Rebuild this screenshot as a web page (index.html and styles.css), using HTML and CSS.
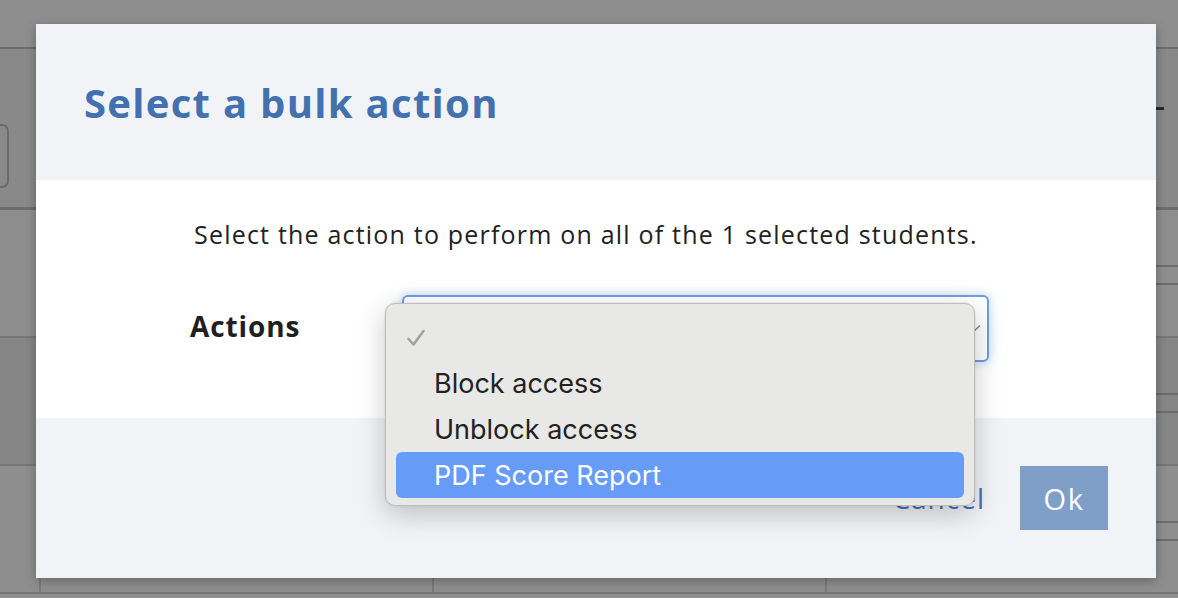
FILE: index.html
```html
<!DOCTYPE html>
<html lang="en">
<head>
<meta charset="utf-8">
<title>Select a bulk action</title>
<link rel="stylesheet" href="styles.css">
</head>
<body>
<div class="page">
  <div class="topbar"></div>
  <div class="toolbar">
    <div class="tool-btn"></div>
    <div class="tool-dash"></div>
  </div>
  <div class="table">
    <div class="row">
      <div class="cell c1"></div><div class="cell c2"></div><div class="cell c3"></div>
      <div class="cell c4"><div class="sub"></div></div>
    </div>
    <div class="row row-dark">
      <div class="cell c1"></div><div class="cell c2"></div><div class="cell c3"></div>
      <div class="cell c4"><div class="sub"></div></div>
    </div>
    <div class="row">
      <div class="cell c1"></div><div class="cell c2"></div><div class="cell c3"></div>
      <div class="cell c4"><div class="sub"></div></div>
    </div>
  </div>
</div>

<div class="modal">
  <div class="modal-header">
    <h1 class="modal-title">Select a bulk action</h1>
  </div>
  <div class="modal-body">
    <p class="intro">Select the action to perform on all of the 1 selected students.</p>
    <div class="form-row">
      <label class="form-label">Actions</label>
      <div class="select-wrap">
        <div class="select">
          <svg class="chev" width="16" height="10" viewBox="0 0 16 10"><path d="M1.5 2 L8 8 L14.5 2" fill="none" stroke="#8a8a8a" stroke-width="1.6" stroke-linecap="round" stroke-linejoin="round"/></svg>
        </div>
        <div class="menu">
          <div class="menu-item">
            <svg class="check" width="20" height="20" viewBox="0 0 20 20"><path d="M2.5 11 L7.5 16.5 L17.5 3" fill="none" stroke="#a0a0a0" stroke-width="2.6" stroke-linecap="round" stroke-linejoin="round"/></svg>
          </div>
          <div class="menu-item">Block access</div>
          <div class="menu-item">Unblock access</div>
          <div class="menu-item active">PDF Score Report</div>
        </div>
      </div>
    </div>
  </div>
  <div class="modal-footer">
    <a class="cancel" href="#">Cancel</a>
    <button class="ok" type="button">Ok</button>
  </div>
</div>
</body>
</html>
```

FILE: styles.css
```css
* { box-sizing: border-box; }
html, body { margin: 0; padding: 0; }
body {
  width: 1178px;
  height: 598px;
  overflow: hidden;
  background: #8e8e8e;
  font-family: "Open Sans", "Liberation Sans", sans-serif;
  position: relative;
}

/* dimmed background page */
.page { width: 1178px; }
.topbar { height: 49px; border-bottom: 2px solid #6c6c6c; }
.toolbar {
  height: 161px;
  border-bottom: 3px solid #6c6c6c;
  background: #898989;
  display: flex;
  justify-content: space-between;
  align-items: flex-start;
}
.tool-btn {
  width: 60px;
  height: 64px;
  margin-top: 75px;
  margin-left: -51px;
  border: 2px solid #6a6a6a;
  border-radius: 7px;
}
.tool-dash {
  width: 24px;
  height: 3px;
  margin-top: 58px;
  margin-right: 14px;
  background: #2a2a2a;
}
.row {
  display: flex;
  height: 128px;
  border-bottom: 2px solid #777;
}
.row-dark { background: #868686; }
.cell { height: 100%; border-left: 2px solid #7a7a7a; }
.c1 { width: 39px; border-left: none; }
.c2 { width: 393px; }
.c3 { width: 393px; }
.c4 { flex: 1; padding-top: 55px; }
.sub {
  height: 20px;
  border-top: 2px solid #6c6c6c;
  border-bottom: 2px solid #6c6c6c;
}

/* modal */
.modal {
  position: absolute;
  left: 36px;
  top: 24px;
  width: 1120px;
  height: 554px;
  background: #f2f3f7;
  box-shadow: 0 3px 10px rgba(0,0,0,0.28);
  display: flex;
  flex-direction: column;
}
.modal-header {
  height: 156px;
  padding-left: 48px;
  display: flex;
  align-items: center;
}
.modal-title {
  margin: 0;
  font-size: 40px;
  font-weight: 700;
  color: #4371b0;
  letter-spacing: 1.3px;
}
.modal-body {
  height: 238px;
  background: #fff;
  padding: 38px 0 0 0;
}
.intro {
  margin: 0 0 0 158px;
  font-size: 25px;
  line-height: 32px;
  color: #222;
  letter-spacing: 1.2px;
}
.form-row {
  display: flex;
  align-items: center;
  margin-top: 45px;
  padding-left: 154px;
}
.form-label {
  width: 212px;
  font-size: 28px;
  font-weight: 700;
  color: #1f1f1f;
  letter-spacing: 0.9px;
  margin-top: -5px;
}
.select-wrap { position: relative; width: 587px; }
.select {
  height: 67px;
  border: 2px solid #6c9fe0;
  border-radius: 6px;
  background: #fff;
  box-shadow: 0 0 8px 2px rgba(120,165,230,0.35);
  display: flex;
  align-items: center;
  justify-content: flex-end;
  padding-right: 6px;
}
.chev { display: block; }

.menu {
  position: absolute;
  left: -17px;
  top: 8px;
  width: 590px;
  height: 203px;
  background: #e8e8e7;
  border: 1px solid #bdbdbd;
  border-radius: 10px;
  box-shadow: 0 8px 28px rgba(0,0,0,0.22), 0 0 2px rgba(0,0,0,0.12);
  padding: 10px 10px 9px 10px;
  font-family: "Inter", "Liberation Sans", sans-serif;
}
.menu-item {
  height: 46px;
  display: flex;
  align-items: center;
  padding-left: 38px;
  font-size: 27px;
  color: #222;
  border-radius: 6px;
  position: relative;
}
.check { position: absolute; left: 10px; top: 14px; }
.menu-item.active { background: #669cf8; color: #fff; }

.modal-footer {
  flex: 1;
  display: flex;
  align-items: center;
  justify-content: flex-end;
  padding-right: 48px;
}
.cancel {
  font-size: 28px;
  color: #4371b0;
  text-decoration: none;
  margin-right: 35px;
  letter-spacing: 1px;
}
.ok {
  width: 88px;
  height: 64px;
  border: none;
  background: #7f9fc8;
  color: #fff;
  font-family: "Open Sans", "Liberation Sans", sans-serif;
  font-size: 29px;
  letter-spacing: 1.5px;
  padding: 0;
}
```
